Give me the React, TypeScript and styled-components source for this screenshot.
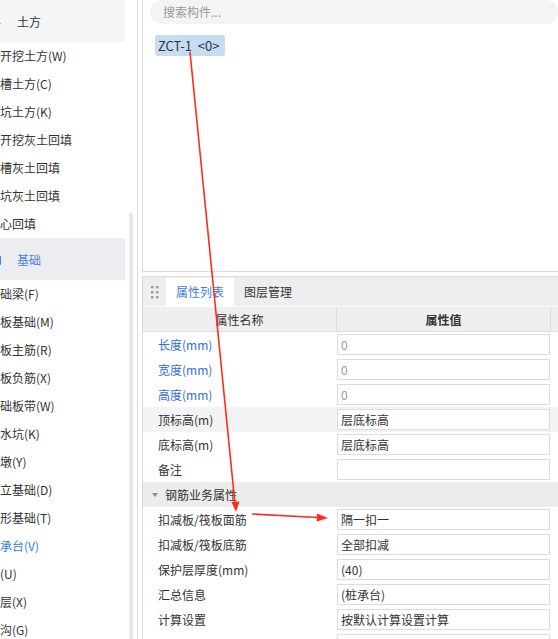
import React from 'react';
import styled, { createGlobalStyle } from 'styled-components';

// Component property editor: family tree on the left, search + component
// tags on top, property grid below.

const GlobalStyle = createGlobalStyle`
  html, body {
    margin: 0;
    padding: 0;
    background: #ffffff;
    overflow: hidden;
  }
  body {
    font-family: "Noto Sans CJK SC", "Noto Sans", sans-serif;
    font-size: 12px;
    color: #333333;
  }
`;

const Page = styled.div`
  position: relative;
  display: flex;
  width: 558px;
  height: 639px;
  overflow: hidden;
`;

// ---------------------------------------------------------------------------
// Sidebar
// ---------------------------------------------------------------------------

const Sidebar = styled.div`
  display: flex;
  flex-shrink: 0;
  width: 137px;
  height: 100%;
  border-right: 1px solid #dcdcdc;
`;

const List = styled.div`
  width: 125px;
  overflow: hidden;
`;

// the tree is scrolled sideways by one character
const ListInner = styled.div`
  margin-left: -12px;
  white-space: nowrap;
`;

const GroupHeader = styled.div<{ $active?: boolean }>`
  display: flex;
  align-items: center;
  height: 42px;
  padding-left: 0;
  background: ${p => (p.$active ? '#ebedf1' : '#f4f5f7')};
  color: ${p => (p.$active ? '#4f80e1' : '#333333')};
`;

const GroupIcon = styled.span`
  display: inline-flex;
  width: 14px;
  height: 12px;
  margin-right: 15px;
`;

const Item = styled.div<{ $active?: boolean }>`
  height: 28px;
  line-height: 28px;
  color: ${p => (p.$active ? '#2b7de9' : '#333333')};
`;

const ScrollTrack = styled.div`
  width: 4px;
  padding: 213px 4px 0 4px;
`;

const ScrollThumb = styled.div`
  height: 100%;
  background: #e8e8e8;
`;

// ---------------------------------------------------------------------------
// Main area
// ---------------------------------------------------------------------------

const Main = styled.div`
  display: flex;
  flex-direction: column;
  flex: 1;
  margin-left: 4px;
  min-width: 0;
`;

const TopPanel = styled.div`
  height: 271px;
  flex-shrink: 0;
  padding-left: 7px;
  border-left: 1px solid #dcdcdc;
  border-bottom: 1px solid #dcdcdc;
`;

const Search = styled.div`
  height: 24px;
  line-height: 23px;
  padding-left: 13px;
  border-radius: 12px;
  background: #f4f4f4;
  color: #999999;
`;

const Tag = styled.div`
  display: inline-flex;
  align-items: center;
  height: 21px;
  margin: 11px 0 0 5px;
  padding: 0 5px 0 3px;
  border-radius: 3px;
  background: #c6dcf2;
  color: #333333;
  font-size: 13px;
  white-space: pre;
`;

const PropPanel = styled.div`
  display: flex;
  flex-direction: column;
  flex: 1;
  margin-top: 4px;
  border-left: 1px solid #dcdcdc;
  border-top: 1px solid #dcdcdc;
`;

const TabBar = styled.div`
  display: flex;
  height: 28px;
  padding-top: 1px;
  background: #eeeeee;
`;

const Handle = styled.div`
  display: flex;
  align-items: center;
  justify-content: center;
  width: 23px;
`;

const Tab = styled.div<{ $active?: boolean }>`
  padding: 0 10px;
  line-height: 28px;
  background: ${p => (p.$active ? '#ffffff' : 'transparent')};
  color: ${p => (p.$active ? '#3b7de2' : '#333333')};
`;

const GridRow = styled.div`
  display: grid;
  grid-template-columns: 194px 214px 1fr;
`;

const HeaderRow = styled(GridRow)`
  height: 24px;
  margin-top: 1px;
  background: #efefef;
  border-bottom: 1px solid #dcdcdc;
`;

const HeaderCell = styled.div<{ $bold?: boolean }>`
  display: flex;
  align-items: center;
  justify-content: center;
  border-right: 1px solid #dcdcdc;
  font-weight: ${p => (p.$bold ? 700 : 400)};
`;

const Row = styled(GridRow)<{ $shaded?: boolean }>`
  height: 25px;
  align-items: center;
  background: ${p => (p.$shaded ? '#f3f3f3' : 'transparent')};
`;

const NameCell = styled.div<{ $link?: boolean }>`
  padding-left: 15px;
  white-space: nowrap;
  color: ${p => (p.$link ? '#2f6de1' : '#333333')};
`;

const ValueBox = styled.div<{ $muted?: boolean }>`
  box-sizing: border-box;
  width: 213px;
  height: 21px;
  line-height: 19px;
  padding-left: 3px;
  border: 1px solid #dcdcdc;
  background: #ffffff;
  white-space: nowrap;
  overflow: hidden;
  color: ${p => (p.$muted ? '#999999' : '#333333')};
`;

const SectionRow = styled.div`
  display: flex;
  align-items: center;
  height: 25px;
  padding-left: 9px;
  background: #ececec;
`;

const SectionCaret = styled.span`
  display: inline-flex;
  margin-right: 7px;
`;

const Overlay = styled.svg`
  position: absolute;
  left: 0;
  top: 0;
  pointer-events: none;
`;

// ---------------------------------------------------------------------------

const earthwork = ['大开挖土方(W)', '基槽土方(C)', '基坑土方(K)', '大开挖灰土回填', '基槽灰土回填', '基坑灰土回填', '房心回填'];
const foundation = [
  '基础梁(F)', '筏板基础(M)', '筏板主筋(R)', '筏板负筋(X)', '基础板带(W)', '集水坑(K)',
  '柱墩(Y)', '独立基础(D)', '条形基础(T)', '桩承台(V)', '桩(U)', '垫层(X)', '地沟(G)',
];

type Prop = { name: string; value: string; link?: boolean; muted?: boolean; shaded?: boolean };

const baseProps: Prop[] = [
  { name: '长度(mm)', value: '0', link: true, muted: true },
  { name: '宽度(mm)', value: '0', link: true, muted: true },
  { name: '高度(mm)', value: '0', link: true, muted: true },
  { name: '顶标高(m)', value: '层底标高', shaded: true },
  { name: '底标高(m)', value: '层底标高' },
  { name: '备注', value: '' },
];

const rebarProps: Prop[] = [
  { name: '扣减板/筏板面筋', value: '隔一扣一' },
  { name: '扣减板/筏板底筋', value: '全部扣减' },
  { name: '保护层厚度(mm)', value: '(40)' },
  { name: '汇总信息', value: '(桩承台)' },
  { name: '计算设置', value: '按默认计算设置计算' },
  { name: '', value: '' },
];

const PropRow: React.FC<{ p: Prop }> = ({ p }) => (
  <Row $shaded={p.shaded}>
    <NameCell $link={p.link}>{p.name}</NameCell>
    <ValueBox $muted={p.muted}>{p.value}</ValueBox>
  </Row>
);

const DragDots = () => (
  <svg width="8" height="14" viewBox="0 0 8 14">
    {[0, 1].map(c =>
      [0, 1, 2].map(r => <rect key={`${c}${r}`} x={c * 5} y={r * 5 + 1} width="2.4" height="2.4" fill="#9a9a9a" />)
    )}
  </svg>
);

const App: React.FC = () => (
  <Page>
    <GlobalStyle />
    <Sidebar>
      <List>
        <ListInner>
          <GroupHeader>
            <GroupIcon>
              <svg width="14" height="12" viewBox="0 0 14 12">
                <path d="M3 9.5 L8 4.5 L12.5 9" fill="none" stroke="#8a8f99" strokeWidth="1.2" />
              </svg>
            </GroupIcon>
            土方
          </GroupHeader>
          {earthwork.map(t => <Item key={t}>{t}</Item>)}
          <GroupHeader $active>
            <GroupIcon>
              <svg width="14" height="12" viewBox="0 0 14 12">
                <rect x="3" y="3" width="10" height="9" rx="1" fill="#3f7fe6" />
              </svg>
            </GroupIcon>
            基础
          </GroupHeader>
          {foundation.map(t => <Item key={t} $active={t === '桩承台(V)'}>{t}</Item>)}
        </ListInner>
      </List>
      <ScrollTrack>
        <ScrollThumb />
      </ScrollTrack>
    </Sidebar>

    <Main>
      <TopPanel>
        <Search>搜索构件...</Search>
        <Tag>{'ZCT-1  <0>'}</Tag>
      </TopPanel>

      <PropPanel>
        <TabBar>
          <Handle><DragDots /></Handle>
          <Tab $active>属性列表</Tab>
          <Tab>图层管理</Tab>
        </TabBar>
        <HeaderRow>
          <HeaderCell>属性名称</HeaderCell>
          <HeaderCell $bold>属性值</HeaderCell>
          <div />
        </HeaderRow>
        {baseProps.map((p, i) => <PropRow key={i} p={p} />)}
        <SectionRow>
          <SectionCaret>
            <svg width="6" height="4" viewBox="0 0 6 4">
              <path d="M0 0 L6 0 L3 4 Z" fill="#8c8c8c" />
            </svg>
          </SectionCaret>
          钢筋业务属性
        </SectionRow>
        {rebarProps.map((p, i) => <PropRow key={i} p={p} />)}
      </PropPanel>
    </Main>

    {/* red annotation arrows drawn over the screenshot */}
    <Overlay width="558" height="639" viewBox="0 0 558 639">
      <line x1="190" y1="52" x2="235" y2="504" stroke="#ff2b1c" strokeWidth="1.6" />
      <polygon points="236,512 231.5,502 239.5,501.5" fill="#ff2b1c" />
      <line x1="252" y1="514" x2="318" y2="517.5" stroke="#ff2b1c" strokeWidth="1.6" />
      <polygon points="328,518 317,513.5 316.6,521.5" fill="#ff2b1c" />
    </Overlay>
  </Page>
);

export default App;
